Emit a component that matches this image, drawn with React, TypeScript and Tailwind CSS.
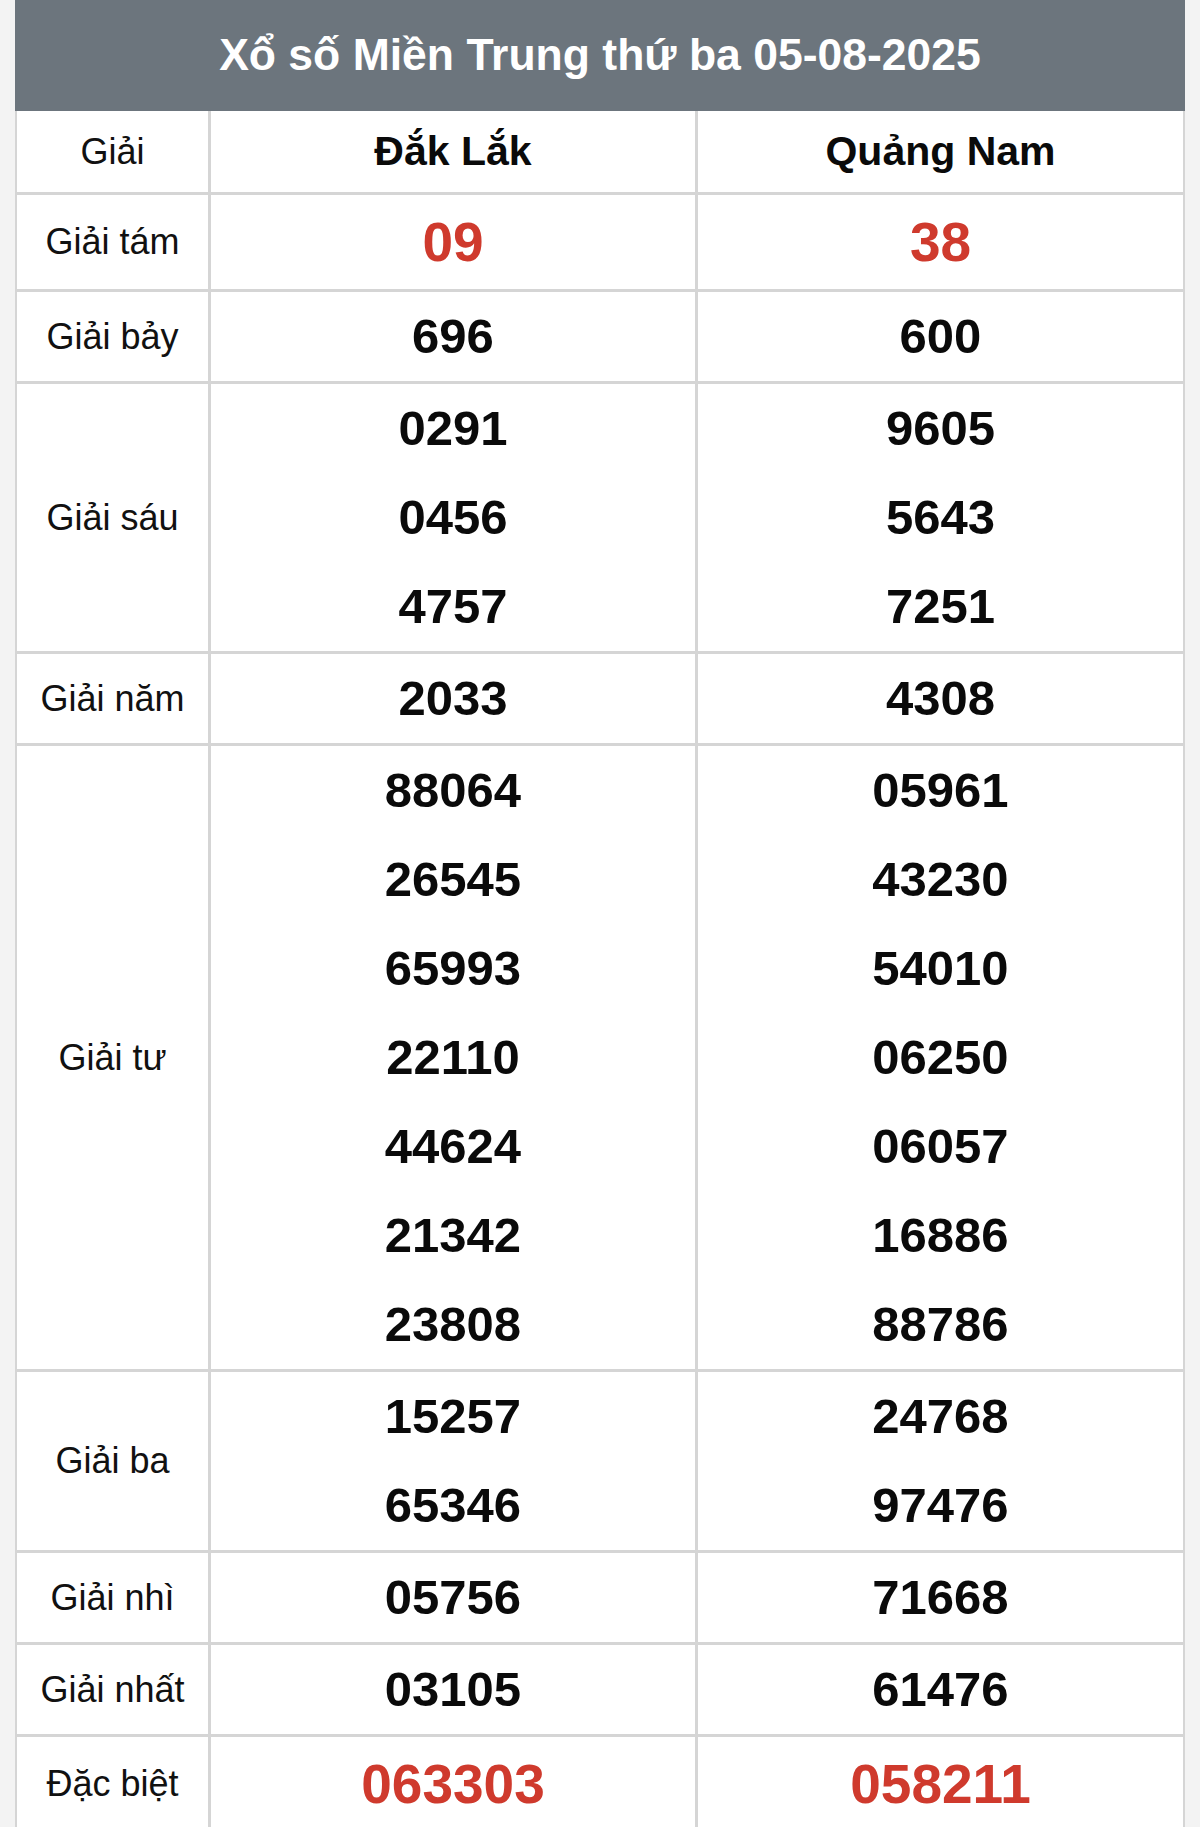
const provinces = ["Đắk Lắk", "Quảng Nam"];

type Prize = {
  label: string;
  a: string[];
  b: string[];
  red?: boolean;
  tall?: boolean;
};

const prizes: Prize[] = [
  { label: "Giải tám", a: ["09"], b: ["38"], red: true, tall: true },
  { label: "Giải bảy", a: ["696"], b: ["600"] },
  { label: "Giải sáu", a: ["0291", "0456", "4757"], b: ["9605", "5643", "7251"] },
  { label: "Giải năm", a: ["2033"], b: ["4308"] },
  {
    label: "Giải tư",
    a: ["88064", "26545", "65993", "22110", "44624", "21342", "23808"],
    b: ["05961", "43230", "54010", "06250", "06057", "16886", "88786"],
  },
  { label: "Giải ba", a: ["15257", "65346"], b: ["24768", "97476"] },
  { label: "Giải nhì", a: ["05756"], b: ["71668"] },
  { label: "Giải nhất", a: ["03105"], b: ["61476"] },
  { label: "Đặc biệt", a: ["063303"], b: ["058211"], red: true, tall: true },
];

function Numbers({ values, red, tall }: { values: string[]; red?: boolean; tall?: boolean }) {
  return (
    <div className="flex flex-col">
      {values.map((v, i) => (
        <div
          key={i}
          className={
            tall
              ? "h-[94px] flex items-center justify-center font-bold text-[55px] text-[#cf3a2d] leading-none"
              : red
                ? "h-[89px] flex items-center justify-center font-bold text-[55px] text-[#cf3a2d] leading-none"
                : "h-[89px] flex items-center justify-center font-bold text-[49px] text-[#0a0a0a] leading-none"
          }
        >
          {v}
        </div>
      ))}
    </div>
  );
}

export default function App() {
  return (
    <div className="bg-[#f3f3f3] px-[15px] font-['Liberation_Sans',Arial,sans-serif]">
      <div className="bg-white border-x-2 border-[#d5d5d5]">
        <div className="h-[111px] bg-[#6c757d] flex items-center justify-center -mx-[2px]">
          <h1 className="text-white font-bold text-[44.5px] leading-none">Xổ số Miền Trung thứ ba 05-08-2025</h1>
        </div>

        <div className="grid grid-cols-[191px_3px_484px_3px_1fr] border-b-[3px] border-[#d5d5d5] h-[84px]">
          <div className="flex items-center justify-center text-[36px] text-[#111]">Giải</div>
          <div className="bg-[#d5d5d5]" />
          <div className="flex items-center justify-center font-bold text-[41px] text-[#0a0a0a]">{provinces[0]}</div>
          <div className="bg-[#d5d5d5]" />
          <div className="flex items-center justify-center font-bold text-[41px] text-[#0a0a0a]">{provinces[1]}</div>
        </div>

        {prizes.map((p, i) => (
          <div
            key={p.label}
            className={
              i === prizes.length - 1
                ? "grid grid-cols-[191px_3px_484px_3px_1fr]"
                : "grid grid-cols-[191px_3px_484px_3px_1fr] border-b-[3px] border-[#d5d5d5]"
            }
          >
            <div className="flex items-center justify-center text-[36px] text-[#111]">{p.label}</div>
            <div className="bg-[#d5d5d5]" />
            <Numbers values={p.a} red={p.red} tall={p.tall} />
            <div className="bg-[#d5d5d5]" />
            <Numbers values={p.b} red={p.red} tall={p.tall} />
          </div>
        ))}
      </div>
    </div>
  );
}
